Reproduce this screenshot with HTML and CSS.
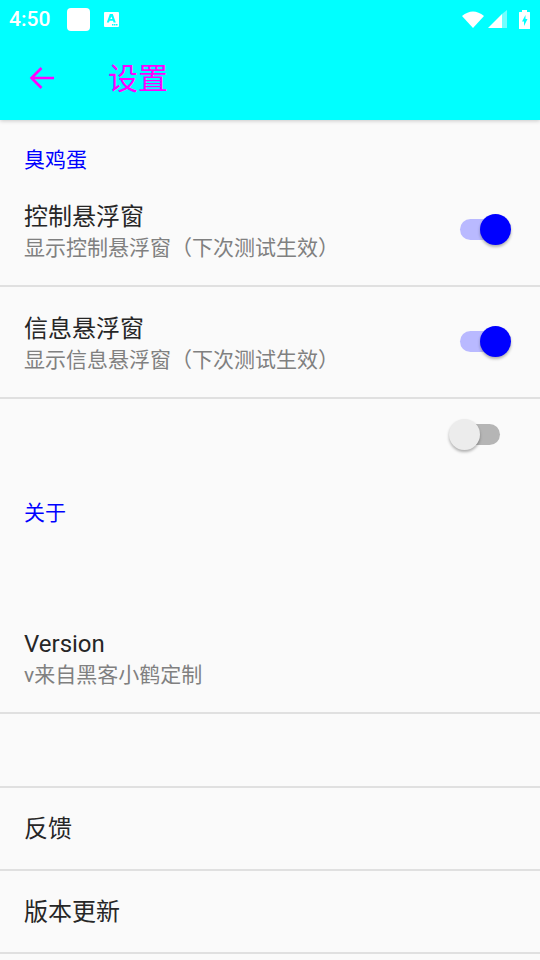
FILE: index.html
```html
<!DOCTYPE html>
<html lang="zh-CN">
<head>
    <meta charset="UTF-8">
    <meta name="viewport" content="width=device-width, initial-scale=1.0">
    <title>设置</title>
    <link rel="stylesheet" href="styles.css">
</head>
<body>

<div class="header">
    <!-- Status bar -->
    <div class="status-bar">
        <span class="time">4:50</span>
        <span class="app-square"></span>
        <svg class="app-a" width="15" height="15" viewBox="0 0 15 15">
            <path fill="#fff" fill-rule="evenodd" d="M1 0h13a1 1 0 0 1 1 1v13a1 1 0 0 1-1 1H1a1 1 0 0 1-1-1V1a1 1 0 0 1 1-1zM5.800 2 2.800 10.500H5L5.600 8.700H9L9.600 10.500H11.800L8.800 2zM7.300 4.400 8.400 7H6.300zM8 12v1.500H9.500V12zM10 12v1.500H11.500V12zM12 12v1.500H13.500V12z"/>
        </svg>
        <div class="status-right">
            <svg width="22" height="17" viewBox="0 0 22 17"><path fill="#fff" d="M0 5Q11-4 22 5L11 17z"/></svg>
            <svg width="19" height="18" viewBox="0 0 19 18">
                <path fill="#fff" opacity="0.45" d="M19 0V18H14V4z"/>
                <path fill="#fff" d="M14 4V18H0z"/>
            </svg>
            <svg class="battery" width="11" height="19" viewBox="0 0 11 19">
                <path fill="#fff" fill-rule="evenodd" d="M3 0H8V2H10.500Q11 2 11 2.500V18.500Q11 19 10.500 19H.5Q0 19 0 18.500V2.500Q0 2 .5 2H3zM6.500 5 3 11.500H5V16L8.500 9H6.500z"/>
            </svg>
        </div>
    </div>
    <!-- Toolbar -->
    <div class="toolbar">
        <svg class="back" width="28" height="28" viewBox="0 0 28 28">
            <path fill="none" stroke="#f0f" stroke-width="2.600" d="M26 14H4M13.500 4 3.500 14l10 10"/>
        </svg>
        <span class="toolbar-title">设置</span>
    </div>
</div>

<div class="content">
    <div class="section-title">臭鸡蛋</div>

    <div class="pref-row">
        <div class="pref-text">
            <div class="pref-name">控制悬浮窗</div>
            <div class="pref-sub">显示控制悬浮窗（下次测试生效）</div>
        </div>
        <div class="switch on"><span class="thumb"></span></div>
    </div>

    <div class="pref-row">
        <div class="pref-text">
            <div class="pref-name">信息悬浮窗</div>
            <div class="pref-sub">显示信息悬浮窗（下次测试生效）</div>
        </div>
        <div class="switch on"><span class="thumb"></span></div>
    </div>

    <div class="loose-switch">
        <div class="switch"><span class="thumb"></span></div>
    </div>

    <div class="section-title about">关于</div>

    <div class="version-row">
        <div class="pref-name">Version</div>
        <div class="pref-sub">v来自黑客小鹤定制</div>
    </div>

    <div class="blank-row"></div>
    <div class="plain-row">反馈</div>
    <div class="plain-row">版本更新</div>
</div>

</body>
</html>
```
FILE: styles.css
```css
* {
    box-sizing: border-box;
}

body {
    margin: 0;
    height: 960px;
    overflow: hidden;
    background-color: #fafafa;
    font-family: "Roboto", "Noto Sans CJK SC", sans-serif;
}

.header {
    height: 120px;
    background-color: #00ffff;
    box-shadow: 0 1px 4px rgba(0, 0, 0, 0.2);
}

.status-bar {
    height: 38px;
    display: flex;
    align-items: center;
    padding: 0 10px 0 9px;
    color: #fff;
}

.time {
    font-size: 21px;
    font-weight: 500;
    width: 58px;
}

.app-square {
    width: 23px;
    height: 23px;
    background-color: #fff;
    border-radius: 4px;
}

.app-a {
    margin-left: 14px;
}

.status-right {
    margin-left: auto;
    display: flex;
    align-items: center;
    gap: 4px;
}

.battery {
    margin-left: 8px;
}

.toolbar {
    height: 82px;
    display: flex;
    align-items: center;
    padding-left: 28px;
}

.back {
    margin-bottom: 2px;
}

.toolbar-title {
    margin-left: 52px;
    padding-bottom: 6px;
    font-size: 30px;
    color: #ff00ff;
}

.section-title {
    height: 55px;
    padding: 27px 24px 0;
    font-size: 21px;
    line-height: 26px;
    color: #0000ff;
}

.pref-row {
    height: 112px;
    display: flex;
    align-items: center;
    padding: 0 40px 0 24px;
    border-bottom: 2px solid #e0e0e0;
}

.pref-text {
    flex: 1;
    padding-top: 4px;
}

.pref-name {
    font-size: 24px;
    line-height: 32px;
    color: #262626;
}

.pref-sub {
    font-size: 21px;
    line-height: 30px;
    color: #808080;
}

.switch {
    position: relative;
    width: 40px;
    height: 21px;
    border-radius: 11px;
    background-color: #b9b9ff;
}

.pref-row .switch {
    margin-bottom: 2px;
}

.thumb {
    position: absolute;
    top: -5px;
    left: -11px;
    width: 31px;
    height: 31px;
    border-radius: 50%;
    background-color: #ececec;
    box-shadow: 0 2px 3px rgba(0, 0, 0, 0.3);
}

.switch.on .thumb {
    left: 20px;
    background-color: #0000ff;
}

.switch:not(.on) {
    background-color: #b5b5b5;
}

.loose-switch {
    height: 63px;
    display: flex;
    justify-content: flex-end;
    padding: 25px 40px 0 0;
}

.section-title.about {
    height: 166px;
    padding-top: 38px;
}

.version-row {
    height: 86px;
    padding: 0 24px;
    border-bottom: 2px solid #e0e0e0;
}

.blank-row {
    height: 74px;
    border-bottom: 2px solid #e0e0e0;
}

.plain-row {
    height: 83px;
    display: flex;
    align-items: center;
    padding: 0 24px 4px;
    font-size: 24px;
    color: #262626;
    border-bottom: 2px solid #e0e0e0;
}
```
